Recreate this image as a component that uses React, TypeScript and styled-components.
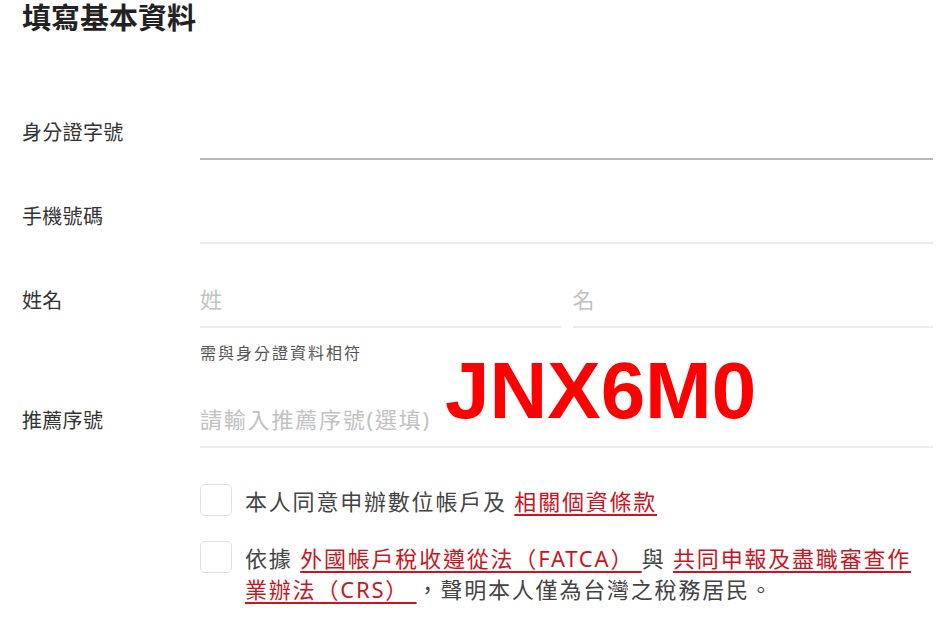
import React from "react";
import styled, { createGlobalStyle } from "styled-components";

const GlobalStyle = createGlobalStyle`
  body {
    margin: 0;
    background: #fff;
    font-family: "Noto Sans", "Noto Sans CJK TC", sans-serif;
  }
`;

const Page = styled.div`
  position: relative;
  padding: 2px 17px 0 22px;
  width: 950px;
  box-sizing: border-box;
`;

const Title = styled.h1`
  margin: 0;
  font-size: 29px;
  line-height: 32px;
  font-weight: 700;
  color: #222;
`;

const Form = styled.div`
  display: flex;
  flex-direction: column;
  gap: 28px;
  margin-top: 70px;
`;

const Row = styled.div`
  display: grid;
  grid-template-columns: 178px 1fr;
  align-items: start;
`;

const Label = styled.label`
  height: 54px;
  display: flex;
  align-items: center;
  font-size: 20px;
  letter-spacing: 0.3px;
  color: #333;
`;

const Field = styled.div`
  display: flex;
  flex-direction: column;
`;

const Pair = styled.div`
  display: grid;
  grid-template-columns: 1fr 1fr;
  gap: 12px;
`;

const Input = styled.input<{ $active?: boolean }>`
  width: 100%;
  height: 56px;
  box-sizing: border-box;
  border: 0;
  border-bottom: 2px solid ${(p) => (p.$active ? "#b8b8b8" : "#ececec")};
  padding: 0;
  outline: none;
  background: transparent;
  font-family: inherit;
  font-size: 22px;
  letter-spacing: 1.8px;
  color: #333;

  &::placeholder {
    color: #c2c2c2;
  }
`;

const Hint = styled.div`
  margin-top: 14px;
  font-size: 16px;
  line-height: 22px;
  letter-spacing: 2px;
  color: #555;
`;

const Agreements = styled.div`
  display: flex;
  flex-direction: column;
  gap: 24px;
  margin: 36px 0 0 178px;
`;

const Agree = styled.div`
  display: flex;
  align-items: flex-start;
  gap: 13px;
`;

const Box = styled.input`
  appearance: none;
  flex: none;
  width: 32px;
  height: 32px;
  margin: 0;
  border: 1px solid #e2e2e2;
  border-radius: 5px;
  background: #fff;
`;

const AgreeText = styled.p`
  max-width: 672px;
  margin: 0;
  padding-top: 2px;
  font-size: 22px;
  line-height: 31px;
  letter-spacing: 1.8px;
  color: #444;
`;

const Link = styled.a`
  color: #c9151e;
  text-decoration: underline;
  text-decoration-thickness: 2px;
  text-underline-offset: 4px;
`;

const Watermark = styled.div`
  position: absolute;
  left: 445px;
  top: 351px;
  font-family: "Liberation Sans", Arial, sans-serif;
  font-weight: 700;
  font-size: 80px;
  line-height: 1;
  color: #ff0000;
  pointer-events: none;
`;

export default function App() {
  return (
    <Page>
      <GlobalStyle />
      <Title>填寫基本資料</Title>
      <Form>
        <Row>
          <Label>身分證字號</Label>
          <Input $active />
        </Row>
        <Row>
          <Label>手機號碼</Label>
          <Input />
        </Row>
        <Row>
          <Label>姓名</Label>
          <Field>
            <Pair>
              <Input placeholder="姓" />
              <Input placeholder="名" />
            </Pair>
            <Hint>需與身分證資料相符</Hint>
          </Field>
        </Row>
        <Row>
          <Label>推薦序號</Label>
          <Input placeholder="請輸入推薦序號(選填)" />
        </Row>
      </Form>
      <Agreements>
        <Agree>
          <Box type="checkbox" />
          <AgreeText>
            本人同意申辦數位帳戶及 <Link href="#">相關個資條款</Link>
          </AgreeText>
        </Agree>
        <Agree>
          <Box type="checkbox" />
          <AgreeText>
            依據 <Link href="#">外國帳戶稅收遵從法（FATCA） </Link>與{" "}
            <Link href="#">共同申報及盡職審查作業辦法（CRS） </Link> ，聲明本人僅為台灣之稅務居民。
          </AgreeText>
        </Agree>
      </Agreements>
      <Watermark>JNX6M0</Watermark>
    </Page>
  );
}
